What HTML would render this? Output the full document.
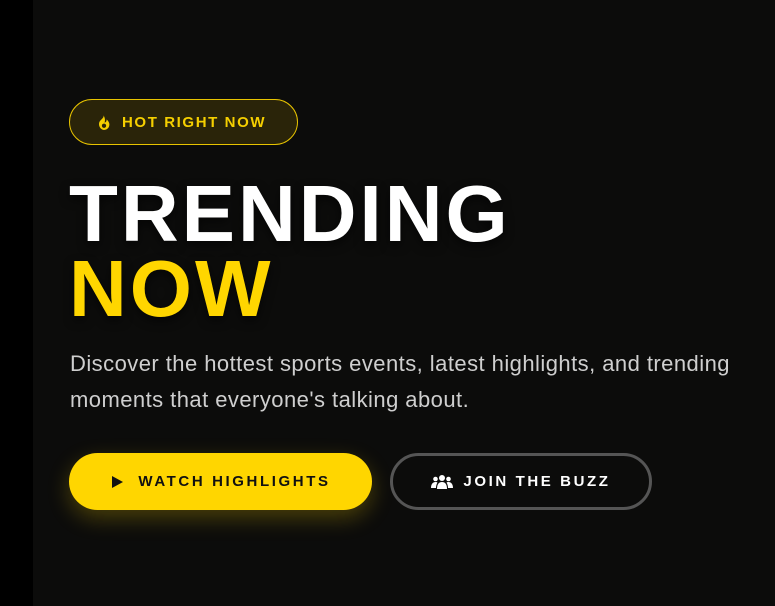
<!DOCTYPE html>
<html><head><style>
*{margin:0;padding:0;box-sizing:border-box}
body{width:775px;height:606px;background:#0c0c0b;overflow:hidden;position:relative;font-family:"Liberation Sans",sans-serif}
.strip{position:absolute;left:0;top:0;width:33px;height:606px;background:#000}
.badge{position:absolute;left:69px;top:99px;width:229px;height:46px;border:1.5px solid #e8c400;border-radius:23px;background:#2a2409;color:#f5cf00;font-weight:bold;font-size:15px;letter-spacing:1.6px;display:flex;align-items:center;padding-left:26px}
.badge svg{margin-right:10px}
h1{position:absolute;left:69px;top:176px;font-size:80px;line-height:75px;font-weight:900;color:#fff;letter-spacing:3px;text-shadow:0 4px 10px rgba(0,0,0,.6)}
h1 span{color:#ffd600}
p{position:absolute;left:70px;top:346px;font-size:22px;line-height:36px;color:#cfcfcf;width:700px;letter-spacing:0.45px}
.b1{position:absolute;left:69px;top:453px;width:303px;height:57px;border-radius:29px;background:#ffd600;box-shadow:0 8px 22px rgba(255,214,0,.25);display:flex;align-items:center;justify-content:center;font-weight:bold;font-size:15px;letter-spacing:2.6px;color:#111}
.b2{position:absolute;left:390px;top:453px;width:262px;height:57px;border-radius:29px;border:3px solid #555;display:flex;align-items:center;justify-content:center;font-weight:bold;font-size:15px;letter-spacing:2.6px;color:#fff}
.b1 svg{margin-right:14px}
.b2 svg{margin-right:10px}
</style></head><body>
<div class="strip"></div>
<div class="badge"><svg width="16" height="17" viewBox="0 0 15 16"><path d="M7 1C8 4 4 5 3 8c-1 4 2 7 4.5 7S13 13 12.5 9C12 7 11 6 10 5c0 2-1 3-2 3 1-3 0-5-1-7z" fill="#f5cf00"/><circle cx="7.5" cy="11" r="2" fill="#2a2409"/></svg>HOT RIGHT NOW</div>
<h1>TRENDING<br><span>NOW</span></h1>
<p>Discover the hottest sports events, latest highlights, and trending moments that everyone's talking about.</p>
<div class="b1"><svg width="14" height="14" viewBox="0 0 14 14"><path d="M2 1l11 6-11 6z" fill="#111"/></svg>WATCH HIGHLIGHTS</div>
<div class="b2"><svg width="22" height="16" viewBox="0 0 22 16"><circle cx="11" cy="4" r="3" fill="#fff"/><circle cx="4.5" cy="5" r="2.3" fill="#fff"/><circle cx="17.5" cy="5" r="2.3" fill="#fff"/><path d="M6 15c0-5 2-7 5-7s5 2 5 7z" fill="#fff"/><path d="M0 14c0-4 2-6 4.5-6 1 0 1.5.3 2 .6C5.5 10 5 12 5 14z" fill="#fff"/><path d="M22 14c0-4-2-6-4.5-6-1 0-1.5.3-2 .6 1 1.4 1.5 3.4 1.5 5.4z" fill="#fff"/></svg>JOIN THE BUZZ</div>
</body></html>
